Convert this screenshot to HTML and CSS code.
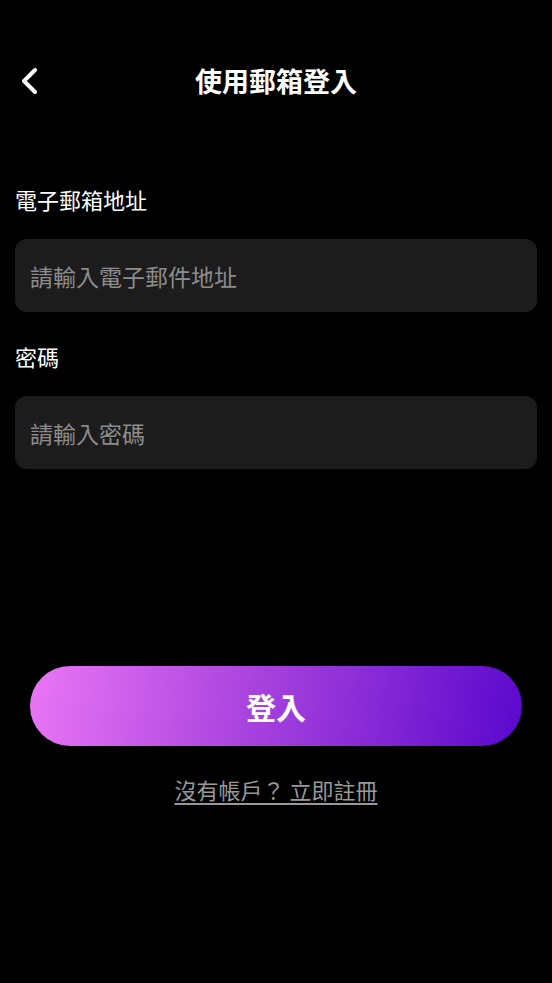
FILE: index.html
```html
<!DOCTYPE html>
<html lang="zh-Hant">
<head>
<meta charset="utf-8">
<title>使用郵箱登入</title>
<link rel="stylesheet" href="styles.css">
</head>
<body>
<div class="screen">
  <header class="topbar">
    <button class="back" aria-label="返回">
      <svg width="24" height="30" viewBox="0 0 24 30"><path d="M16 4 L5 15 L16 26" fill="none" stroke="#fff" stroke-width="4" stroke-linecap="round" stroke-linejoin="round"/></svg>
    </button>
    <h1 class="title">使用郵箱登入</h1>
    <span></span>
  </header>
  <form class="form">
    <label class="label" for="email">電子郵箱地址</label>
    <input class="field" id="email" type="text" placeholder="請輸入電子郵件地址">
    <label class="label label-2" for="pw">密碼</label>
    <input class="field" id="pw" type="password" placeholder="請輸入密碼">
  </form>
  <div class="actions">
    <button class="submit" type="button">登入</button>
    <a class="register" href="#">沒有帳戶？ 立即註冊</a>
  </div>
</div>
</body>
</html>
```
FILE: styles.css
```css
* { box-sizing: border-box; }
html, body { margin: 0; padding: 0; background: #000; }
body {
  font-family: "Noto Sans CJK TC", "Noto Sans", sans-serif;
  color: #fff;
  width: 552px;
  height: 983px;
  overflow: hidden;
}
.screen { display: flex; flex-direction: column; }
.topbar {
  margin-top: 53px;
  height: 56px;
  display: grid;
  grid-template-columns: 1fr auto 1fr;
  align-items: center;
  padding: 0 14px;
}
.back {
  justify-self: start;
  background: none;
  border: 0;
  padding: 0 0 0 5px;
  display: flex;
  align-items: center;
  cursor: pointer;
}
.title {
  margin: 0;
  font-size: 27px;
  font-weight: 700;
  line-height: 36px;
}
.form {
  display: flex;
  flex-direction: column;
  padding: 0 15px;
  margin-top: 75px;
}
.label {
  font-size: 22px;
  line-height: 30px;
  margin: 0 0 25px 0;
}
.label-2 { margin-top: 29px; }
.field {
  height: 73px;
  border: 0;
  border-radius: 12px;
  background: #1c1c1c;
  color: #fff;
  font-family: inherit;
  font-size: 23px;
  padding: 0 15px;
  outline: none;
}
.field::placeholder { color: #8c8c8c; }
.actions {
  margin-top: 197px;
  padding: 0 30px;
  display: flex;
  flex-direction: column;
  align-items: center;
}
.submit {
  width: 100%;
  height: 80px;
  border: 0;
  border-radius: 40px;
  background: linear-gradient(100deg, #ea76f5 0%, #a943de 45%, #5a08cc 100%);
  color: #fff;
  font-family: inherit;
  font-size: 30px;
  font-weight: 700;
  line-height: 1;
  cursor: pointer;
}
.register {
  margin-top: 28px;
  font-size: 22px;
  line-height: 30px;
  color: #999;
  text-decoration: underline;
  text-underline-offset: 4px;
}
```
